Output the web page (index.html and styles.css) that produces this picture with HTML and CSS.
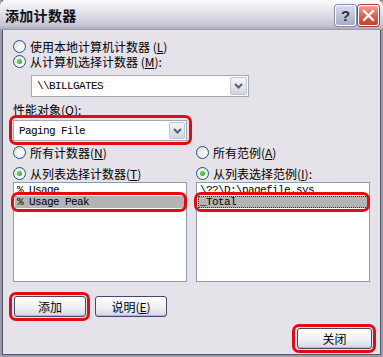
FILE: index.html
```html
<!DOCTYPE html>
<html>
<head>
<meta charset="utf-8">
<link rel="stylesheet" href="styles.css">
</head>
<body>
<div class="window">
  <div class="titlebar">
    <span class="title">添加计数器</span>
    <div class="tbtns">
      <span class="tbtn help">?</span>
      <span class="tbtn close"><svg width="13" height="13" viewBox="0 0 13 13"><path d="M2 2 L11 11 M11 2 L2 11" stroke="#fff" stroke-width="2.2" stroke-linecap="square"/></svg></span>
    </div>
  </div>
  <div class="content">
    <div class="radio r1"><span class="dot"></span><span class="rt">使用本地计算机计数器 (<u>L</u>)</span></div>
    <div class="radio r2"><span class="dot on"></span><span class="rt">从计算机选择计数器 (<u>M</u>):</span></div>
    <div class="combo c1"><span class="ctext">\\BILLGATES</span><span class="drop"><svg width="9" height="6" viewBox="0 0 9 6"><path d="M1 1 L4.5 4.5 L8 1" fill="none" stroke="#4d6185" stroke-width="2"/></svg></span></div>
    <div class="label">性能对象(<u>O</u>):</div>
    <div class="mark mark-obj">
      <div class="combo c2"><span class="ctext">Paging File</span><span class="drop"><svg width="9" height="6" viewBox="0 0 9 6"><path d="M1 1 L4.5 4.5 L8 1" fill="none" stroke="#4d6185" stroke-width="2"/></svg></span></div>
    </div>
    <div class="cols">
      <div class="col">
        <div class="radio"><span class="dot"></span><span class="rt">所有计数器(<u>N</u>)</span></div>
        <div class="radio r-list"><span class="dot on"></span><span class="rt">从列表选择计数器(<u>T</u>)</span></div>
        <div class="list">
          <div class="item">% Usage</div>
          <div class="mark mark-item"><div class="item sel">% Usage Peak</div></div>
        </div>
      </div>
      <div class="col">
        <div class="radio"><span class="dot"></span><span class="rt">所有范例(<u>A</u>)</span></div>
        <div class="radio r-list"><span class="dot on"></span><span class="rt">从列表选择范例(<u>I</u>):</span></div>
        <div class="list">
          <div class="item">\??\D:\pagefile.sys</div>
          <div class="mark mark-item"><div class="item sel focus">_Total</div></div>
        </div>
      </div>
    </div>
    <div class="btnrow">
      <div class="mark mark-btn"><button class="btn">添加</button></div>
      <button class="btn">说明(<u>E</u>)</button>
    </div>
    <div class="closerow">
      <div class="mark mark-btn"><button class="btn">关闭</button></div>
    </div>
  </div>
</div>
</body>
</html>
```
FILE: styles.css
```css
* { box-sizing: border-box; }
html, body { margin: 0; padding: 0; }
body {
  width: 383px;
  height: 357px;
  overflow: hidden;
  font-family: "Noto Sans CJK SC", "Liberation Sans", sans-serif;
  font-size: 12px;
  color: #000;
  background: #fff;
}
.window {
  width: 383px;
  height: 357px;
  display: flex;
  flex-direction: column;
  background: #e6e2e9;
  border: 2px solid #9a9aa8;
  border-top: none;
  box-shadow: inset 1px 0 0 #55556a, inset -1px 0 0 #55556a, inset 0 -1px 0 #55556a;
}
.titlebar {
  height: 30px;
  margin: 0 -2px;
  display: flex;
  align-items: center;
  justify-content: space-between;
  padding: 0 4px 0 5px;
  background: linear-gradient(#fbfbfd 0%, #ececf2 25%, #d8d8e2 60%, #c2c2d2 90%, #a8a8ba 100%);
  border-bottom: 1px solid #9c9cac;
  border-radius: 6px 6px 0 0;
}
.title {
  font-size: 14px;
  font-weight: bold;
  letter-spacing: 0.3px;
  color: #111;
  line-height: 16px;
  margin-top: 1px;
}
.tbtns { display: flex; gap: 2px; margin-top: 1px; }
.tbtn {
  width: 21px;
  height: 21px;
  border-radius: 3px;
  display: flex;
  align-items: center;
  justify-content: center;
  font-family: "Liberation Sans", sans-serif;
  font-weight: bold;
  font-size: 15px;
}
.help {
  border: 1px solid #fff;
  background: linear-gradient(#d8dce8, #a8acc4);
  color: #2d2d44;
  box-shadow: 0 0 0 1px #8a8ea8;
}
.close {
  border: 1px solid #fff;
  background: linear-gradient(#f0a090, #d85a48 60%, #c24030);
  box-shadow: 0 0 0 1px #a04040;
}
.content {
  flex: 1;
  display: flex;
  flex-direction: column;
  padding: 10px 9px 0 11px;
}
u {
  text-decoration: underline;
  display: inline-block;
  line-height: 12px;
  height: 12px;
}
.radio {
  display: flex;
  align-items: center;
  height: 13px;
  line-height: 12px;
  white-space: nowrap;
}
.rt {
  display: inline-block;
  height: 12px;
  line-height: 12px;
}
.r2 { margin-top: 2px; }
.dot {
  width: 13px;
  height: 13px;
  border-radius: 50%;
  border: 1px solid #1d5283;
  background: radial-gradient(circle at 65% 65%, #fff 0%, #eeeee8 50%, #dcdcd4 100%);
  margin-right: 4px;
  flex: none;
  position: relative;
}
.dot.on::after {
  content: "";
  position: absolute;
  left: 3px;
  top: 3px;
  width: 5px;
  height: 5px;
  border-radius: 50%;
  background: radial-gradient(circle at 40% 40%, #72d26a, #21a121);
}
.combo {
  display: flex;
  align-items: center;
  background: #fff;
  border: 1px solid #a1a9b3;
  padding: 1px;
}
.c1 {
  margin: 7px 0 0 18px;
  width: 218px;
  height: 22px;
}
.ctext {
  flex: 1;
  padding-left: 4px;
  font-family: "Liberation Mono", monospace;
  font-size: 11px;
  letter-spacing: -0.6px;
}
.drop {
  width: 17px;
  height: 100%;
  display: flex;
  align-items: center;
  justify-content: center;
  background: linear-gradient(#f4f4f8, #d4d4de);
  border: 1px solid #c0c4d0;
  border-radius: 2px;
}
.label {
  margin-top: 6px;
  height: 13px;
  line-height: 13px;
}
.mark { position: relative; }
.mark::after {
  content: "";
  position: absolute;
  border: 3px solid #e30b12;
  border-radius: 7px;
  pointer-events: none;
}
.mark-obj { margin-top: 4px; width: 174px; }
.mark-obj::after { left: -4px; right: -5px; top: -5px; bottom: -4px; }
.c2 { width: 174px; height: 21px; }
.c2 .drop { width: 16px; }
.cols {
  display: flex;
  gap: 9px;
  margin-top: 5px;
}
.col {
  width: 174px;
  display: flex;
  flex-direction: column;
}
.r-list { margin-top: 8px; }
.list {
  margin-top: 2px;
  height: 100px;
  background: #fff;
  border: 1px solid #8e9baa;
  padding: 1px 1px 0 1px;
  overflow: visible;
}
.item {
  height: 12px;
  line-height: 12px;
  padding-left: 2px;
  font-family: "Liberation Mono", monospace;
  font-size: 11px;
  letter-spacing: -0.6px;
  white-space: nowrap;
  overflow: hidden;
}
.sel { background: #b4b4b6; }
.focus { outline: 1px dotted #333; outline-offset: -1px; }
.mark-item::after { left: -4px; right: -2px; top: -4px; bottom: -4px; }
.btnrow {
  display: flex;
  gap: 9px;
  margin-top: 14px;
  margin-left: 1px;
}
.btn {
  width: 72px;
  height: 21px;
  padding: 0;
  font-family: "Noto Sans CJK SC", sans-serif;
  font-size: 12px;
  line-height: 12px;
  color: #000;
  border: 1px solid #44486a;
  border-radius: 3px;
  background: linear-gradient(#ffffff 0%, #f2f2f6 50%, #dcdce6 90%, #c6c6d4 100%);
  box-shadow: inset 0 -1px 0 #b8b8c8;
}
.mark-btn::after { left: -5px; right: -4px; top: -4px; bottom: -4px; }
.closerow {
  display: flex;
  justify-content: flex-end;
  margin-top: 11px;
}
.closerow .btn { width: 75px; }
```
